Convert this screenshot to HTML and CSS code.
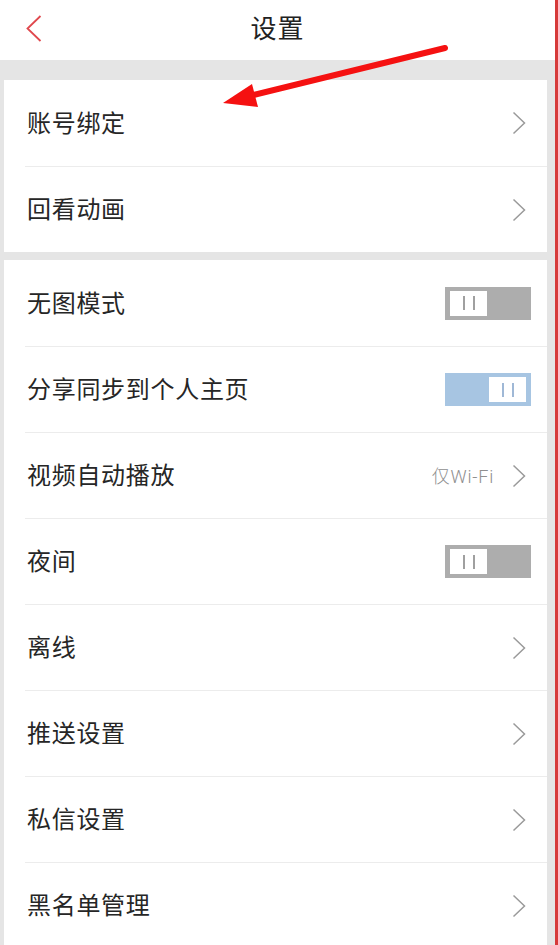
FILE: index.html
```html
<!DOCTYPE html>
<html lang="zh-CN">
<head>
  <meta charset="UTF-8">
  <meta name="viewport" content="width=device-width, initial-scale=1.0">
  <title>设置</title>
  <link rel="stylesheet" href="styles.css">
</head>
<body>
  <div class="page">
    <header class="top-bar">
      <button class="back-btn" aria-label="返回">
        <svg width="16" height="27" viewBox="0 0 16 27"><polyline points="14.5,1 1.5,13.5 14.5,26" fill="none" stroke="#e0484d" stroke-width="1.8"/></svg>
      </button>
      <h1 class="title">设置</h1>
      <span></span>
    </header>

    <section class="group group-first">
      <div class="row">
        <span class="label">账号绑定</span>
        <svg class="chevron" width="14" height="24" viewBox="0 0 14 24"><polyline points="1.5,1.5 12.5,12 1.5,22.5" fill="none" stroke="#9a9a9a" stroke-width="1.5"/></svg>
      </div>
      <div class="row">
        <span class="label">回看动画</span>
        <svg class="chevron" width="14" height="24" viewBox="0 0 14 24"><polyline points="1.5,1.5 12.5,12 1.5,22.5" fill="none" stroke="#9a9a9a" stroke-width="1.5"/></svg>
      </div>
    </section>

    <section class="group">
      <div class="row">
        <span class="label">无图模式</span>
        <span class="switch"><span class="knob"><i></i><i></i></span></span>
      </div>
      <div class="row">
        <span class="label">分享同步到个人主页</span>
        <span class="switch on"><span class="knob"><i></i><i></i></span></span>
      </div>
      <div class="row">
        <span class="label">视频自动播放</span>
        <span class="value">仅Wi-Fi</span>
        <svg class="chevron" width="14" height="24" viewBox="0 0 14 24"><polyline points="1.5,1.5 12.5,12 1.5,22.5" fill="none" stroke="#9a9a9a" stroke-width="1.5"/></svg>
      </div>
      <div class="row">
        <span class="label">夜间</span>
        <span class="switch"><span class="knob"><i></i><i></i></span></span>
      </div>
      <div class="row">
        <span class="label">离线</span>
        <svg class="chevron" width="14" height="24" viewBox="0 0 14 24"><polyline points="1.5,1.5 12.5,12 1.5,22.5" fill="none" stroke="#9a9a9a" stroke-width="1.5"/></svg>
      </div>
      <div class="row">
        <span class="label">推送设置</span>
        <svg class="chevron" width="14" height="24" viewBox="0 0 14 24"><polyline points="1.5,1.5 12.5,12 1.5,22.5" fill="none" stroke="#9a9a9a" stroke-width="1.5"/></svg>
      </div>
      <div class="row">
        <span class="label">私信设置</span>
        <svg class="chevron" width="14" height="24" viewBox="0 0 14 24"><polyline points="1.5,1.5 12.5,12 1.5,22.5" fill="none" stroke="#9a9a9a" stroke-width="1.5"/></svg>
      </div>
      <div class="row">
        <span class="label">黑名单管理</span>
        <svg class="chevron" width="14" height="24" viewBox="0 0 14 24"><polyline points="1.5,1.5 12.5,12 1.5,22.5" fill="none" stroke="#9a9a9a" stroke-width="1.5"/></svg>
      </div>
    </section>

    <!-- annotation arrow drawn over the page -->
    <svg class="annotation" width="558" height="120" viewBox="0 0 558 120">
      <line x1="445" y1="48" x2="245" y2="97" stroke="#f51111" stroke-width="6" stroke-linecap="round"/>
      <polygon points="223,103 252,84 258,107" fill="#f51111"/>
    </svg>
  </div>
</body>
</html>
```

FILE: styles.css
```css
/* Reset */
* {
  margin: 0;
  padding: 0;
  box-sizing: border-box;
}

body {
  font-family: "Noto Sans CJK SC", "Noto Sans", sans-serif;
  background-color: #fff;
  color: #262626;
}

.page {
  position: relative;
  width: 558px;
  min-height: 945px;
  background-color: #e5e5e5;
  border-right: 3px solid #d63a3a;
  overflow: hidden;
}

/* Header */
.top-bar {
  height: 60px;
  background: #fff;
  display: grid;
  grid-template-columns: 1fr auto 1fr;
  align-items: center;
}

.back-btn {
  justify-self: start;
  margin-left: 26px;
  margin-bottom: 3px;
  border: none;
  background: none;
  display: flex;
}

.title {
  font-size: 26px;
  font-weight: 400;
  color: #222;
  letter-spacing: 1px;
  padding-bottom: 8px;
}

/* Groups */
.group {
  background: #fff;
  margin: 8px 8px 0 4px;
}

.group-first {
  margin-top: 20px;
}

.row {
  height: 86px;
  margin-left: 21px;
  padding: 0 16px 0 2px;
  display: flex;
  align-items: center;
}

.row + .row {
  border-top: 1px solid #ececec;
}

.label {
  flex: 1;
  font-size: 24px;
  letter-spacing: 0.7px;
  padding-bottom: 4px;
}

.value {
  font-family: "Roboto", "Noto Sans CJK SC", sans-serif;
  font-size: 18px;
  font-weight: 300;
  color: #8f8f8f;
  letter-spacing: 0.8px;
  margin-right: 18px;
  padding-bottom: 2px;
}

.chevron {
  margin-right: 5px;
}

/* Switches */
.switch {
  width: 86px;
  height: 33px;
  background: #adadad;
  padding: 4px 5px;
  display: flex;
}

.switch.on {
  background: #a7c5e2;
  justify-content: flex-end;
}

.knob {
  width: 37px;
  height: 25px;
  background: #fff;
  display: flex;
  justify-content: center;
  align-items: center;
  gap: 8px;
}

.knob i {
  width: 2px;
  height: 14px;
  background: #a0a0a0;
}

.switch.on .knob i {
  background: #9fb8d6;
}

/* Annotation */
.annotation {
  position: absolute;
  left: 0;
  top: 0;
  pointer-events: none;
}
```
